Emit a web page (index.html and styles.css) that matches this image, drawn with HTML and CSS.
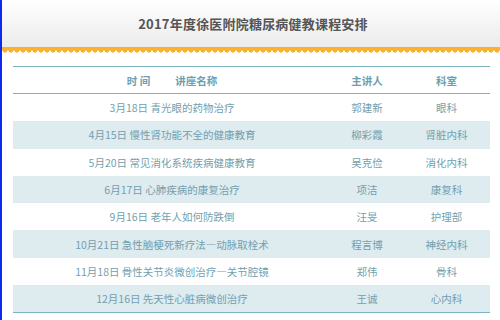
FILE: index.html
```html
<!DOCTYPE html>
<html lang="zh-CN">
<head>
<meta charset="utf-8">
<link rel="stylesheet" href="styles.css">
</head>
<body>
<div class="page">
  <header class="head">
    <h1 class="title">2017年度徐医附院糖尿病健教课程安排</h1>
  </header>
  <div class="band"></div>
  <div class="wrap">
    <table class="sched">
      <colgroup><col class="c1"><col class="c2"><col class="c3"></colgroup>
      <thead>
        <tr><th><span class="t-time">时 间</span>讲座名称</th><th>主讲人</th><th>科室</th></tr>
      </thead>
      <tbody>
        <tr><td>3月18日 青光眼的药物治疗</td><td>郭建新</td><td>眼科</td></tr>
        <tr><td>4月15日 慢性肾功能不全的健康教育</td><td>柳彩霞</td><td>肾脏内科</td></tr>
        <tr><td>5月20日 常见消化系统疾病健康教育</td><td>吴克俭</td><td>消化内科</td></tr>
        <tr><td>6月17日 心肺疾病的康复治疗</td><td>项洁</td><td>康复科</td></tr>
        <tr><td>9月16日 老年人如何防跌倒</td><td>汪旻</td><td>护理部</td></tr>
        <tr><td>10月21日 急性脑梗死新疗法—动脉取栓术</td><td>程言博</td><td>神经内科</td></tr>
        <tr><td>11月18日 骨性关节炎微创治疗—关节腔镜</td><td>郑伟</td><td>骨科</td></tr>
        <tr><td>12月16日 先天性心脏病微创治疗</td><td>王诚</td><td>心内科</td></tr>
      </tbody>
    </table>
  </div>
</div>
</body>
</html>
```
FILE: styles.css
```css
html, body {
  margin: 0;
  padding: 0;
  background: #fff;
}
.page {
  width: 498px;
  height: 320px;
  border-left: 2px solid #0a2bef;
  font-family: "Noto Sans CJK SC", "Noto Sans", sans-serif;
  overflow: hidden;
}
.head {
  height: 47px;
  background: linear-gradient(#ffffff, #ebebeb);
  display: flex;
  align-items: center;
  justify-content: center;
}
.title {
  margin: 0;
  font-size: 13px;
  font-weight: bold;
  color: #555;
  letter-spacing: 0.2px;
  padding-left: 4px;
}
.band {
  height: 6px;
  background:
    radial-gradient(circle at 3px 3px, #fbb12c 2.4px, transparent 2.8px) 0 0 / 6px 6px repeat-x,
    linear-gradient(#fbb12c 0 3px, transparent 3px);
}
.wrap {
  padding: 13px 0 0 11px;
}
.sched {
  width: 477px;
  table-layout: fixed;
  border-collapse: collapse;
  border-top: 1px solid #7ab4c3;
  border-bottom: 1px solid #7ab4c3;
  font-size: 10.5px;
  color: #729faf;
}
.c1 { width: 318px; }
.c2 { width: 72px; }
.c3 { width: 87px; }
.sched th {
  height: 26px;
  padding: 0;
  font-weight: bold;
  color: #6e9fae;
  text-align: center;
  border-bottom: 1px solid #7ab4c3;
}
.t-time {
  margin-right: 25px;
}
.sched td {
  height: 27.3px;
  padding: 0;
  text-align: center;
}
.sched tbody tr:nth-child(even) td {
  background: #deebef;
}
```
